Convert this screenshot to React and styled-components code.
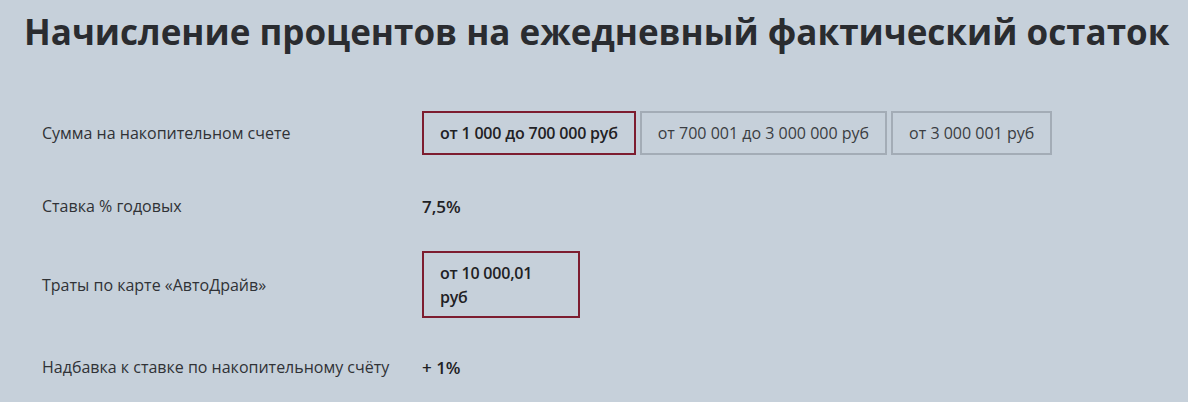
import React from "react";
import styled, { createGlobalStyle } from "styled-components";

const GlobalStyle = createGlobalStyle`
  html, body {
    margin: 0;
    padding: 0;
    background: #c6d0da;
  }
  body {
    font-family: "Open Sans", "Liberation Sans", sans-serif;
    color: #2b2b2b;
  }
`;

const Page = styled.div`
  width: 1188px;
  height: 402px;
  overflow: hidden;
  background: #c6d0da;
`;

const Title = styled.h2`
  margin: 0;
  padding: 10px 0 0 24px;
  font-size: 35px;
  line-height: 44px;
  font-weight: 700;
  color: #2a2c30;
  white-space: nowrap;
`;

const Table = styled.div`
  display: flex;
  flex-direction: column;
  padding: 57px 0 0 42px;
`;

const Row = styled.div`
  display: grid;
  grid-template-columns: 380px 1fr;
  align-items: center;
  min-height: 44px;
  margin-top: ${(p) => p.$space || 0}px;
`;

const Label = styled.div`
  font-size: 16px;
  line-height: 20px;
  color: #303236;
`;

const Options = styled.div`
  display: flex;
  gap: 4px;
`;

const Option = styled.div`
  box-sizing: border-box;
  height: 44px;
  padding: 0 16px;
  display: flex;
  align-items: center;
  font-size: 16px;
  letter-spacing: ${(p) => (p.$active ? "-0.2px" : "0")};
  font-weight: ${(p) => (p.$active ? 600 : 400)};
  color: ${(p) => (p.$active ? "#1f2124" : "#3a3d42")};
  border: 2px solid ${(p) => (p.$active ? "#7d1d2f" : "#a3acb6")};
  white-space: nowrap;
`;

const CardBox = styled.div`
  box-sizing: border-box;
  width: 158px;
  height: 67px;
  padding: 8px 16px;
  font-size: 16px;
  letter-spacing: -0.2px;
  line-height: 24px;
  font-weight: 600;
  color: #1f2124;
  border: 2px solid #7d1d2f;
`;

const Value = styled.div`
  font-size: 17px;
  font-weight: 600;
  color: #1f2124;
`;

export default function App() {
  return (
    <Page>
      <GlobalStyle />
      <Title>Начисление процентов на ежедневный фактический остаток</Title>
      <Table>
        <Row>
          <Label>Сумма на накопительном счете</Label>
          <Options>
            <Option $active>от 1 000 до 700 000 руб</Option>
            <Option>от 700 001 до 3 000 000 руб</Option>
            <Option>от 3 000 001 руб</Option>
          </Options>
        </Row>
        <Row $space={29}>
          <Label>Ставка % годовых</Label>
          <Value>7,5%</Value>
        </Row>
        <Row $space={23}>
          <Label>Траты по карте «АвтоДрайв»</Label>
          <CardBox>
            от 10 000,01
            <br />
            руб
          </CardBox>
        </Row>
        <Row $space={27}>
          <Label>Надбавка к ставке по накопительному счёту</Label>
          <Value>+ 1%</Value>
        </Row>
      </Table>
    </Page>
  );
}
